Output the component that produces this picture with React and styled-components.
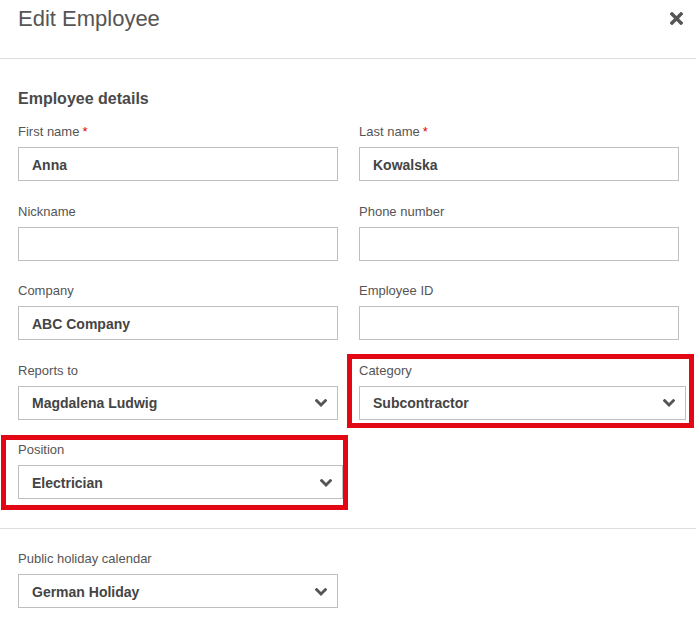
import React from "react";
import styled, { createGlobalStyle } from "styled-components";

const GlobalStyle = createGlobalStyle`
  * { box-sizing: border-box; }
  body {
    margin: 0;
    background: #fff;
    font-family: "Liberation Sans", Arial, sans-serif;
    color: #555;
  }
`;

const Modal = styled.div`
  width: 696px;
  background: #fff;
`;

const Header = styled.header`
  height: 59px;
  display: flex;
  justify-content: space-between;
  align-items: flex-start;
  padding: 6px 13px 0 18px;
  border-bottom: 1px solid #ddd;
`;

const Title = styled.h1`
  margin: 0;
  font-size: 22px;
  line-height: 26px;
  font-weight: 400;
  color: #555;
`;

const CloseButton = styled.button`
  margin-top: 6px;
  width: 13px;
  height: 13px;
  padding: 0;
  border: none;
  background: none;
  display: flex;
  cursor: pointer;
`;

const Section = styled.section`
  padding: ${(p) => p.$pad};
  border-top: ${(p) => (p.$divided ? "1px solid #ddd" : "none")};
`;

const SectionTitle = styled.h2`
  margin: 0 0 15px;
  font-size: 16px;
  line-height: 20px;
  font-weight: 700;
  color: #4a4a4a;
`;

const Grid = styled.div`
  display: grid;
  grid-template-columns: 320px 320px;
  column-gap: 21px;
  row-gap: 22.5px;
`;

const Field = styled.div`
  display: flex;
  flex-direction: column;
  width: ${(p) => p.$width || "auto"};
`;

const Label = styled.label`
  font-size: 13px;
  line-height: 16px;
  color: #555;
  margin-bottom: 7px;
`;

const Required = styled.span`
  color: #e3000f;
  margin-left: 3px;
`;

const Input = styled.input`
  height: 34px;
  width: 100%;
  border: 1px solid #bfbfbf;
  border-radius: 0;
  padding: 1px 13px 0;
  font-family: "Liberation Sans", Arial, sans-serif;
  font-size: 14px;
  font-weight: 700;
  color: #444;
  outline: none;
`;

const Select = styled.div`
  height: 34px;
  width: 100%;
  border: 1px solid #bfbfbf;
  padding: 1px 10px 0 13px;
  display: flex;
  align-items: center;
  justify-content: space-between;
  font-size: 14px;
  font-weight: 700;
  color: #444;
  cursor: pointer;
`;

const Highlight = styled.div`
  border: 5px solid #e30613;
  margin: ${(p) => p.$margin};
  padding: ${(p) => p.$pad};
  display: flex;
  flex-direction: column;
`;

const Chevron = () => (
  <svg width="12" height="8" viewBox="0 0 12 8">
    <path
      d="M1.6 1.6 L6 6 L10.4 1.6"
      fill="none"
      stroke="#555"
      strokeWidth="2.8"
      strokeLinecap="square"
    />
  </svg>
);

const CloseIcon = () => (
  <svg width="13" height="13" viewBox="0 0 13 13">
    <path
      d="M2 2 L11 11 M11 2 L2 11"
      stroke="#555"
      strokeWidth="3.4"
      strokeLinecap="square"
    />
  </svg>
);

const TextField = ({ label, value, required }) => (
  <Field>
    <Label>
      {label}
      {required && <Required>*</Required>}
    </Label>
    <Input defaultValue={value} />
  </Field>
);

const SelectField = ({ label, value }) => (
  <>
    <Label>{label}</Label>
    <Select>
      <span>{value}</span>
      <Chevron />
    </Select>
  </>
);

export default function App() {
  return (
    <>
      <GlobalStyle />
      <Modal>
        <Header>
          <Title>Edit Employee</Title>
          <CloseButton aria-label="Close">
            <CloseIcon />
          </CloseButton>
        </Header>

        <Section $pad="30px 18px 29px">
          <SectionTitle>Employee details</SectionTitle>
          <Grid>
            <TextField label="First name" value="Anna" required />
            <TextField label="Last name" value="Kowalska" required />
            <TextField label="Nickname" value="" />
            <TextField label="Phone number" value="" />
            <TextField label="Company" value="ABC Company" />
            <TextField label="Employee ID" value="" />
            <Field>
              <SelectField label="Reports to" value="Magdalena Ludwig" />
            </Field>
            <Highlight $margin="-9px -15px -8px -12px" $pad="4px 3px 3px 7px">
              <SelectField label="Category" value="Subcontractor" />
            </Highlight>
            <Highlight $margin="-7px -10px -11px -17px" $pad="2px 0 6px 12px">
              <SelectField label="Position" value="Electrician" />
            </Highlight>
          </Grid>
        </Section>

        <Section $divided $pad="22px 18px 18px">
          <Field $width="320px">
            <SelectField label="Public holiday calendar" value="German Holiday" />
          </Field>
        </Section>
      </Modal>
    </>
  );
}
